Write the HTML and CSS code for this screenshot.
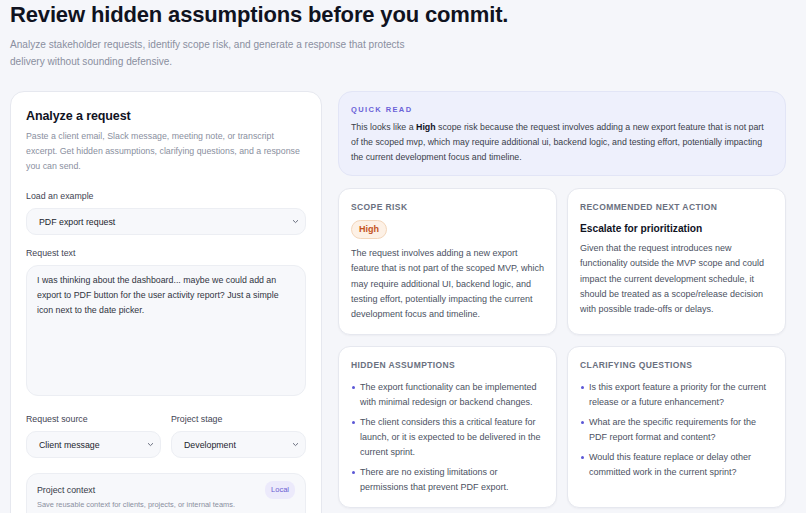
FILE: index.html
```html
<!DOCTYPE html>
<html lang="en">
<head>
  <meta charset="UTF-8">
  <title>Scope Check</title>
  <link rel="stylesheet" href="styles.css">
</head>
<body>

  <header class="hero">
    <h1>Review hidden assumptions before you commit.</h1>
    <p>Analyze stakeholder requests, identify scope risk, and generate a response that protects<br>delivery without sounding defensive.</p>
  </header>

  <main class="layout">
    <section class="panel">
      <h2>Analyze a request</h2>
      <p class="panel-desc">Paste a client email, Slack message, meeting note, or transcript excerpt. Get hidden assumptions, clarifying questions, and a response you can send.</p>

      <label class="label first">Load an example</label>
      <div class="select">
        <span>PDF export request</span>
        <svg width="7" height="5" viewBox="0 0 7 5"><path d="M1 1.2 3.5 3.6 6 1.2" fill="none" stroke="#6b7080" stroke-width="1"/></svg>
      </div>

      <label class="label">Request text</label>
      <textarea class="request">I was thinking about the dashboard... maybe we could add an export to PDF button for the user activity report? Just a simple icon next to the date picker.</textarea>

      <div class="pair">
        <div>
          <label class="label">Request source</label>
          <div class="select">
            <span>Client message</span>
            <svg width="7" height="5" viewBox="0 0 7 5"><path d="M1 1.2 3.5 3.6 6 1.2" fill="none" stroke="#6b7080" stroke-width="1"/></svg>
          </div>
        </div>
        <div>
          <label class="label">Project stage</label>
          <div class="select">
            <span>Development</span>
            <svg width="7" height="5" viewBox="0 0 7 5"><path d="M1 1.2 3.5 3.6 6 1.2" fill="none" stroke="#6b7080" stroke-width="1"/></svg>
          </div>
        </div>
      </div>

      <div class="context">
        <div class="context-head">
          <span>Project context</span>
          <span class="local">Local</span>
        </div>
        <p>Save reusable context for clients, projects, or internal teams.</p>
        <p>Create a context to reuse it in later requests.</p>
      </div>
    </section>

    <section class="results">
      <div class="quick">
        <div class="quick-label">QUICK READ</div>
        <p>This looks like a <b>High</b> scope risk because the request involves adding a new export feature that is not part of the scoped mvp, which may require additional ui, backend logic, and testing effort, potentially impacting the current development focus and timeline.</p>
      </div>

      <div class="cards">
        <div class="card">
          <div class="card-label">SCOPE RISK</div>
          <span class="badge-high">High</span>
          <p>The request involves adding a new export feature that is not part of the scoped MVP, which may require additional UI, backend logic, and testing effort, potentially impacting the current development focus and timeline.</p>
        </div>
        <div class="card">
          <div class="card-label">RECOMMENDED NEXT ACTION</div>
          <h3>Escalate for prioritization</h3>
          <p>Given that the request introduces new functionality outside the MVP scope and could impact the current development schedule, it should be treated as a scope/release decision with possible trade-offs or delays.</p>
        </div>
        <div class="card">
          <div class="card-label">HIDDEN ASSUMPTIONS</div>
          <ul>
            <li>The export functionality can be implemented with minimal redesign or backend changes.</li>
            <li>The client considers this a critical feature for launch, or it is expected to be delivered in the current sprint.</li>
            <li>There are no existing limitations or permissions that prevent PDF export.</li>
          </ul>
        </div>
        <div class="card">
          <div class="card-label">CLARIFYING QUESTIONS</div>
          <ul>
            <li>Is this export feature a priority for the current release or a future enhancement?</li>
            <li>What are the specific requirements for the PDF report format and content?</li>
            <li>Would this feature replace or delay other committed work in the current sprint?</li>
          </ul>
        </div>
      </div>
    </section>
  </main>

</body>
</html>
```

FILE: styles.css
```css
:root {
  --bg: #f5f6fa;
  --card: #fff;
  --border: #e6e8ef;
  --field: #f7f8fb;
  --ink: #10131f;
  --muted: #8a8fa0;
  --body: #4b5162;
  --accent: #5b57d6;
}
body {
  margin: 0;
  padding: 2px 10px 0;
  font-family: "Liberation Sans", Arial, sans-serif;
  background: var(--bg);
  color: var(--ink);
  overflow: hidden;
}
.hero h1 {
  margin: 0;
  font-size: 22px;
  line-height: 26px;
  letter-spacing: -0.15px;
  color: var(--ink);
}
.hero p {
  margin: 8px 0 0;
  font-size: 10.1px;
  line-height: 17px;
  color: var(--muted);
}
.layout {
  display: grid;
  grid-template-columns: 312px 448px;
  gap: 16px;
  align-items: start;
  margin-top: 21px;
}

/* left panel */
.panel {
  background: var(--card);
  border: 1px solid var(--border);
  border-radius: 14px;
  padding: 16px 15px 20px;
}
.panel h2 {
  margin: 0;
  font-size: 12.5px;
  line-height: 16px;
  letter-spacing: -0.1px;
}
.panel-desc {
  margin: 5px 0 0;
  font-size: 8.8px;
  line-height: 15px;
  color: var(--muted);
}
.label {
  display: block;
  font-size: 8.8px;
  line-height: 14px;
  color: #3f4453;
  margin: 11px 0 5px;
}
.label.first { margin-top: 15px; }
.select {
  display: flex;
  justify-content: space-between;
  align-items: center;
  height: 25px;
  padding: 0 6px 0 12px;
  background: var(--field);
  border: 1px solid #eceef3;
  border-radius: 10px;
  font-size: 8.8px;
  color: #22252e;
}
.request {
  display: block;
  box-sizing: border-box;
  width: 100%;
  height: 131px;
  margin: 0;
  padding: 7px 10px;
  resize: none;
  background: var(--field);
  border: 1px solid #eceef3;
  border-radius: 12px;
  font-family: inherit;
  font-size: 8.8px;
  line-height: 15px;
  color: #30343f;
}
.pair {
  display: grid;
  grid-template-columns: 1fr 1fr;
  gap: 10px;
}
.pair .label { margin-top: 16px; }
.context {
  margin-top: 15px;
  background: var(--field);
  border: 1px solid #eceef3;
  border-radius: 12px;
  padding: 7px 10px 12px;
}
.context-head {
  display: flex;
  justify-content: space-between;
  align-items: center;
  font-size: 8.8px;
  color: #353946;
  line-height: 12px;
}
.local {
  background: #eceafb;
  color: #6a5cd2;
  font-size: 7.5px;
  padding: 3px 6px;
  border-radius: 8px;
}
.context p {
  margin: 0;
  font-size: 7.4px;
  line-height: 11px;
  color: var(--muted);
}

/* right column */
.results {
  display: flex;
  flex-direction: column;
  gap: 12px;
}
.quick {
  background: #eef0fc;
  border: 1px solid #e2e5f6;
  border-radius: 14px;
  padding: 13px 12px 10px;
}
.quick-label {
  font-size: 7.5px;
  line-height: 10px;
  font-weight: bold;
  letter-spacing: 1.4px;
  color: #6a62d8;
}
.quick p {
  margin: 5px 0 0;
  font-size: 8.8px;
  line-height: 15px;
  color: #3a3e4a;
}
.quick b { color: var(--ink); }
.cards {
  display: grid;
  grid-template-columns: 1fr 1fr;
  gap: 11px 10px;
}
.card {
  background: var(--card);
  border: 1px solid var(--border);
  border-radius: 12px;
  padding: 12px 12px 12px;
  box-shadow: 0 1px 2px rgba(20, 24, 40, 0.04);
}
.card-label {
  font-size: 8.5px;
  line-height: 12px;
  font-weight: bold;
  letter-spacing: 0.4px;
  color: #6a7080;
}
.card p {
  margin: 0;
  font-size: 9px;
  line-height: 15.25px;
  color: var(--body);
}
.badge-high {
  display: inline-block;
  margin: 7px 0 7px;
  padding: 0 7px;
  height: 17px;
  line-height: 17px;
  background: #fdf1e6;
  border: 1px solid #f3d6bb;
  border-radius: 10px;
  font-size: 9px;
  font-weight: bold;
  color: #c4531d;
}
.card h3 {
  margin: 10px 0 6px;
  font-size: 10.2px;
  line-height: 12px;
  color: var(--ink);
}
.card ul {
  list-style: none;
  margin: 9px 0 0;
  padding: 0;
}
.card li {
  position: relative;
  padding-left: 9px;
  font-size: 9px;
  line-height: 15px;
  color: var(--body);
}
.card li + li { margin-top: 5px; }
.card li::before {
  content: "";
  position: absolute;
  left: 1px;
  top: 6px;
  width: 3px;
  height: 3px;
  border-radius: 50%;
  background: var(--accent);
}
```
